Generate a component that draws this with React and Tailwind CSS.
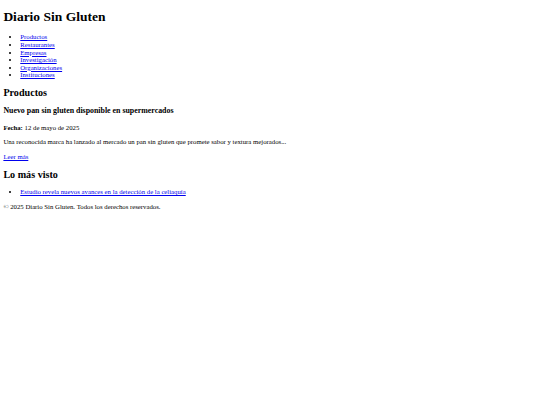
const navItems = [
  'Productos',
  'Restaurantes',
  'Empresas',
  'Investigación',
  'Organizaciones',
  'Instituciones',
];

function NavLink({ children }) {
  return (
    <a href="#" className="text-[#0000ee] underline">
      {children}
    </a>
  );
}

export default function App() {
  return (
    <div className="flow-root min-h-[405px] bg-white px-[3.375px] text-black text-[6.75px] leading-[7.6px] font-['Liberation_Serif','Times_New_Roman',serif]">
      <header>
        <h1 className="my-[9.045px] text-[13.5px] leading-[15.4px] font-bold">Diario Sin Gluten</h1>
        <nav>
          <ul className="my-[6.75px] list-disc pl-[16.875px]">
            {navItems.map((item) => (
              <li key={item}>
                <NavLink>{item}</NavLink>
              </li>
            ))}
          </ul>
        </nav>
      </header>

      <main>
        <section>
          <h2 className="my-[8.404px] text-[10.125px] leading-[11.4px] font-bold">Productos</h2>
          <article>
            <h3 className="my-[7.898px] text-[7.898px] leading-[8.86px] font-bold">
              Nuevo pan sin gluten disponible en supermercados
            </h3>
            <p className="my-[6.75px]">
              <strong className="font-bold">Fecha:</strong> 12 de mayo de 2025
            </p>
            <p className="my-[6.75px]">
              Una reconocida marca ha lanzado al mercado un pan sin gluten que promete sabor y textura mejorados...
            </p>
            <NavLink>Leer más</NavLink>
          </article>
        </section>

        <aside>
          <h2 className="my-[8.404px] text-[10.125px] leading-[11.4px] font-bold">Lo más visto</h2>
          <ul className="my-[6.75px] list-disc pl-[16.875px]">
            <li>
              <NavLink>Estudio revela nuevos avances en la detección de la celiaquía</NavLink>
            </li>
          </ul>
        </aside>
      </main>

      <footer>
        <p className="my-[6.75px]">© 2025 Diario Sin Gluten. Todos los derechos reservados.</p>
      </footer>
    </div>
  );
}
